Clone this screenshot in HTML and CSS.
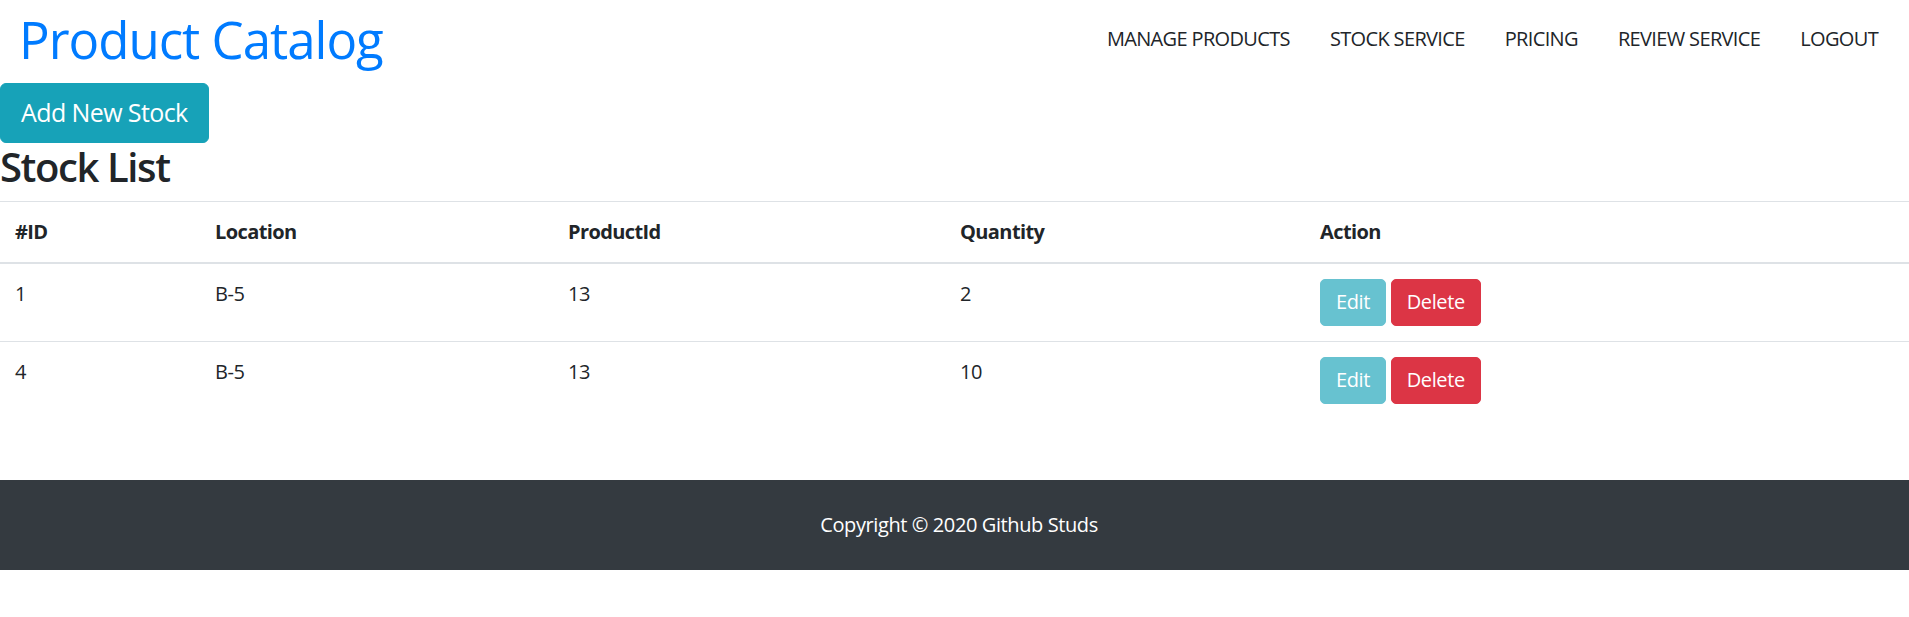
FILE: index.html
```html
<!DOCTYPE html>
<html lang="en">
<head>
<meta charset="utf-8">
<title>Product Catalog</title>
<link rel="stylesheet" href="styles.css">
</head>
<body>
<nav class="navbar">
  <a class="brand" href="#">Product Catalog</a>
  <ul class="nav-links">
    <li><a href="#">MANAGE PRODUCTS</a></li>
    <li><a href="#">STOCK SERVICE</a></li>
    <li><a href="#">PRICING</a></li>
    <li><a href="#">REVIEW SERVICE</a></li>
    <li><a href="#">LOGOUT</a></li>
  </ul>
</nav>
<main class="content">
  <button class="btn btn-info btn-lg" type="button">Add New Stock</button>
  <h2 class="title">Stock List</h2>
  <table class="table">
    <colgroup>
      <col class="c-id"><col class="c-loc"><col class="c-prod"><col class="c-qty"><col class="c-act">
    </colgroup>
    <thead>
      <tr><th>#ID</th><th>Location</th><th>ProductId</th><th>Quantity</th><th>Action</th></tr>
    </thead>
    <tbody>
      <tr>
        <td>1</td><td>B-5</td><td>13</td><td>2</td>
        <td><button class="btn btn-edit" type="button" disabled>Edit</button> <button class="btn btn-danger" type="button">Delete</button></td>
      </tr>
      <tr>
        <td>4</td><td>B-5</td><td>13</td><td>10</td>
        <td><button class="btn btn-edit" type="button" disabled>Edit</button> <button class="btn btn-danger" type="button">Delete</button></td>
      </tr>
    </tbody>
  </table>
</main>
<footer class="footer">
  <p class="copy">Copyright © 2020 Github Studs</p>
</footer>
</body>
</html>
```
FILE: styles.css
```css
* { box-sizing: border-box; }

body {
  margin: 0;
  font-family: "Segoe UI", "Open Sans", "Noto Sans", sans-serif;
  font-size: 20px;
  line-height: 1.5;
  letter-spacing: -0.4px;
  color: #212529;
  background: #fff;
}

.navbar {
  display: flex;
  align-items: center;
  justify-content: space-between;
  height: 83px;
  padding: 0 11px 0 19px;
}

.brand {
  font-size: 51px;
  line-height: 1.2;
  letter-spacing: -1px;
  color: #007bff;
  text-decoration: none;
  font-weight: 400;
  margin-top: -3px;
}

.nav-links {
  display: flex;
  list-style: none;
  margin: -5px 0 0;
  padding: 0;
}

.nav-links a {
  display: block;
  padding: 0 20px;
  color: #212529;
  text-decoration: none;
  font-size: 20px;
  line-height: 30px;
  letter-spacing: -0.65px;
}

.content { margin: 0; }

.btn {
  display: inline-block;
  font-family: inherit;
  font-weight: 400;
  font-size: 20px;
  line-height: 1.5;
  letter-spacing: -0.4px;
  padding: 7.5px 15px;
  border: 1.25px solid transparent;
  border-radius: 5px;
  color: #fff;
  cursor: pointer;
  vertical-align: middle;
}

.btn-info { background: #17a2b8; border-color: #17a2b8; }
.btn-lg { font-size: 25px; padding: 10px 20px; border-radius: 6px; letter-spacing: -0.6px; }
.btn-edit { background: #17a2b8; border-color: #17a2b8; opacity: .65; cursor: default; }
.btn-danger { background: #dc3545; border-color: #dc3545; }

.title {
  margin: 0 0 10px;
  font-size: 40px;
  font-weight: 600;
  line-height: 1.2;
  letter-spacing: -1.4px;
}

.table {
  width: 100%;
  border-collapse: collapse;
  margin: 0;
  table-layout: fixed;
}

.c-id { width: 200px; }
.c-loc { width: 353px; }
.c-prod { width: 392px; }
.c-qty { width: 360px; }

.table th,
.table td {
  padding: 15px;
  text-align: left;
  vertical-align: top;
  border-top: 1.25px solid #dee2e6;
}

.table th { font-weight: 700; letter-spacing: -0.6px; }
.table thead th { border-bottom: 2.5px solid #dee2e6; }

.footer {
  margin-top: 61px;
  background: #343a40;
  color: #fff;
  text-align: center;
  padding: 30px 0;
}

.copy { margin: 0; line-height: 30px; padding-left: 9px; }
```
